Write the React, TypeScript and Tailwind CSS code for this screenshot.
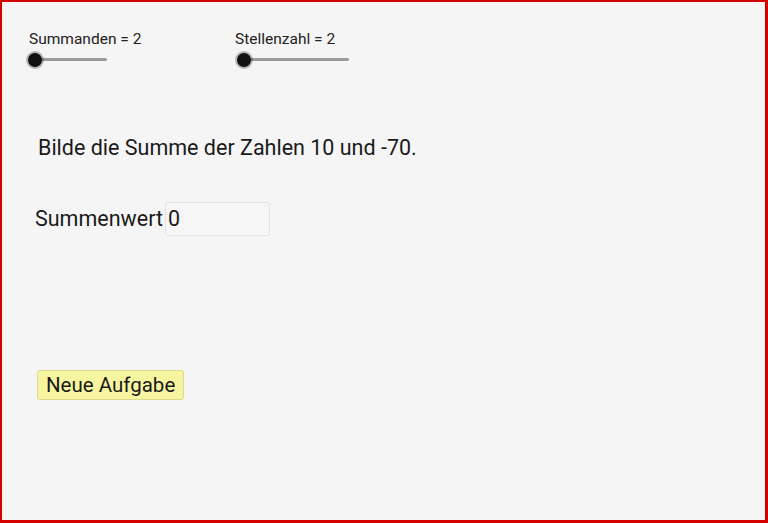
import React from 'react';

const Slider = ({ label, trackWidth, knobOffset }: { label: string; trackWidth: number; knobOffset: number }) => (
  <div className="flex flex-col">
    <span className="text-[15.5px] leading-[18px] text-[#222]">{label}</span>
    <div className="relative mt-[5px] h-[14px]" style={{ width: trackWidth + 14, marginLeft: knobOffset }}>
      <div className="absolute left-[6px] top-[5px] h-[3px] rounded-full bg-[#9a9a9a]" style={{ width: trackWidth }} />
      <div className="absolute left-0 top-0 h-[14px] w-[14px] rounded-full bg-[#111] shadow-[0_0_0_2px_rgba(0,0,0,0.25)]" />
    </div>
  </div>
);

export default function App() {
  return (
    <div
      className="h-[523px] w-[768px] overflow-hidden border-t-2 border-l-2 border-r-[3px] border-b-[3px] border-[#d40000] bg-[#f5f5f5] text-[#1a1a1a]"
      style={{ fontFamily: 'Roboto, "Noto Sans", sans-serif' }}
    >
      <div className="flex pl-[27px] pt-[28px]">
        <div className="w-[206px]">
          <Slider label="Summanden = 2" trackWidth={73} knobOffset={-1} />
        </div>
        <Slider label="Stellenzahl = 2" trackWidth={106} knobOffset={2} />
      </div>

      <p className="ml-[36px] mt-[67px] text-[21.5px] leading-[28px]">
        Bilde die Summe der Zahlen 10 und -70.
      </p>

      <div className="ml-[33px] mt-[40px] flex items-center gap-[2px]">
        <span className="text-[21.5px] leading-[28px]">Summenwert</span>
        <div className="flex h-[34px] w-[105px] items-center rounded-[3px] border border-[#e2e2e2] bg-[#f6f6f6] pl-[2px] text-[21.5px]">
          0
        </div>
      </div>

      <button className="ml-[35px] mt-[134px] flex h-[30px] items-center rounded-[3px] border border-[#dcd98a] bg-[#f8f5a0] px-[8px] text-[20.5px] leading-[26px] text-[#1a1a1a]">
        Neue Aufgabe
      </button>
    </div>
  );
}
